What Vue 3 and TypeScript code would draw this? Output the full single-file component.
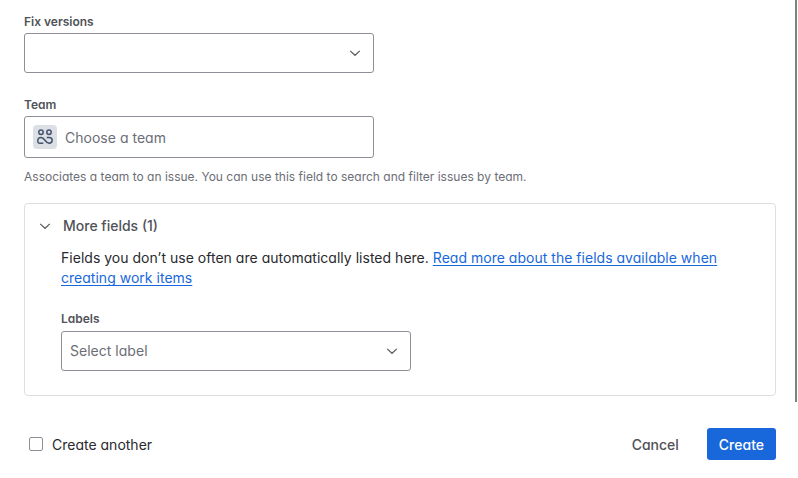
<script setup lang="ts">
import { ref } from 'vue'

const createAnother = ref(false)
const fieldCount = 1
</script>

<template>
  <form class="dialog" @submit.prevent>
    <div class="body">
      <section class="field">
        <label class="label">Fix versions</label>
        <div class="control">
          <svg class="chevron" viewBox="0 0 16 16"><path d="M3.2 5.9 8 10.3 12.8 5.9" /></svg>
        </div>
      </section>

      <section class="field team">
        <label class="label">Team</label>
        <div class="control tall">
          <span class="avatar">
            <svg viewBox="0 0 16 16">
              <circle cx="4" cy="3.3" r="2.2" />
              <circle cx="12" cy="3.3" r="2.2" />
              <path d="M6.300 14.200H2.400C1.300 14.200.8 13.700.8 12.600V11.600C.8 9.700 2.200 8.400 4.200 8.400C8 8.400 8 14.200 12 14.200C14 14.200 15.200 13 15.200 11.300C15.200 9.600 13.900 8.400 12.200 8.400H9.700" />
            </svg>
          </span>
          <span class="placeholder">Choose a team</span>
        </div>
        <p class="help">Associates a team to an issue. You can use this field to search and filter issues by team.</p>
      </section>

      <section class="panel">
        <div class="panel-head">
          <svg class="chevron" viewBox="0 0 16 16"><path d="M3.2 5.9 8 10.3 12.8 5.9" /></svg>
          <span>More fields ({{ fieldCount }})</span>
        </div>
        <div class="panel-body">
          <p class="intro">Fields you don’t use often are automatically listed here. <a class="link">Read more about the fields available when creating work items</a></p>
          <label class="label">Labels</label>
          <div class="control">
            <span class="placeholder">Select label</span>
            <svg class="chevron" viewBox="0 0 16 16"><path d="M3.2 5.9 8 10.3 12.8 5.9" /></svg>
          </div>
        </div>
      </section>
    </div>

    <footer class="footer">
      <label class="check">
        <input v-model="createAnother" type="checkbox" />
        <span>Create another</span>
      </label>
      <div class="actions">
        <button type="button" class="btn">Cancel</button>
        <button type="submit" class="btn primary">Create</button>
      </div>
    </footer>
    <div class="scrollbar"></div>
  </form>
</template>

<style>
body {
  margin: 0;
  background: #fff;
}
</style>

<style scoped>
.dialog {
  position: relative;
  box-sizing: border-box;
  width: 798px;
  height: 478px;
  padding: 14px 22px 0 24px;
  overflow: hidden;
  background: #fff;
  color: #292a2e;
  font-family: Inter, "Liberation Sans", sans-serif;
  font-feature-settings: "cv11" 1;
  font-size: 14px;
  line-height: 20px;
}
.field {
  display: flex;
  flex-direction: column;
}
.team {
  margin-top: 24px;
}
.label {
  display: block;
  height: 16px;
  margin-bottom: 4px;
  color: #505258;
  font-size: 12px;
  font-weight: 600;
  line-height: 16px;
}
.field .label {
  margin-bottom: 3px;
}
.control {
  display: flex;
  align-items: center;
  box-sizing: border-box;
  width: 350px;
  height: 40px;
  padding: 0 10px 0 8px;
  border: 1px solid #8c8f97;
  border-radius: 3px;
}
.control.tall {
  height: 42px;
}
.control .chevron {
  margin-left: auto;
}
.chevron {
  width: 16px;
  height: 16px;
  flex: none;
  fill: none;
  stroke: #5c5e64;
  stroke-width: 1.25;
}
.placeholder {
  color: #6b6e76;
  letter-spacing: 0.02px;
}
.tall .placeholder {
  padding-top: 2px;
}
.avatar {
  display: grid;
  place-items: center;
  width: 24px;
  height: 24px;
  margin-right: 8px;
  border-radius: 4px;
  background: #dcdfe4;
}
.avatar svg {
  width: 16px;
  height: 16px;
  fill: none;
  stroke: #44546f;
  stroke-width: 1.5;
}
.help {
  margin: 11px 0 0;
  color: #6b6e76;
  font-size: 12px;
  line-height: 16px;
  letter-spacing: 0.007px;
}
.panel {
  box-sizing: border-box;
  height: 193px;
  margin-top: 18px;
  padding: 12px 36px 0 12px;
  border: 1px solid #dddee1;
  border-radius: 4px;
}
.panel-head {
  display: flex;
  align-items: center;
  gap: 10px;
  color: #505258;
  font-weight: 500;
}
.panel-body {
  padding-left: 24px;
}
.intro {
  margin: 12px 0 23px;
  letter-spacing: 0.02px;
}
.link {
  color: #1868db;
  text-decoration: underline;
  text-decoration-thickness: 1px;
  text-decoration-skip-ink: none;
  text-underline-offset: 2px;
}
.footer {
  display: flex;
  align-items: center;
  justify-content: space-between;
  height: 32px;
  margin-top: 32px;
}
.check {
  display: flex;
  align-items: center;
  gap: 9px;
  padding-left: 5px;
}
.check span {
  padding-top: 2px;
}
.check input {
  appearance: none;
  box-sizing: border-box;
  width: 14px;
  height: 14px;
  margin: 0;
  border: 1px solid #8c8f97;
  border-radius: 2px;
}
.actions {
  display: flex;
  gap: 16px;
}
.btn {
  height: 32px;
  padding: 2px 12px 0;
  border: 0;
  border-radius: 3px;
  background: none;
  color: #505258;
  font: inherit;
  font-feature-settings: inherit;
  font-weight: 500;
}
.primary {
  background: #1868db;
  color: #fff;
}
.scrollbar {
  position: absolute;
  top: 0;
  left: 795px;
  width: 2px;
  height: 402px;
  background: #808080;
}
</style>
